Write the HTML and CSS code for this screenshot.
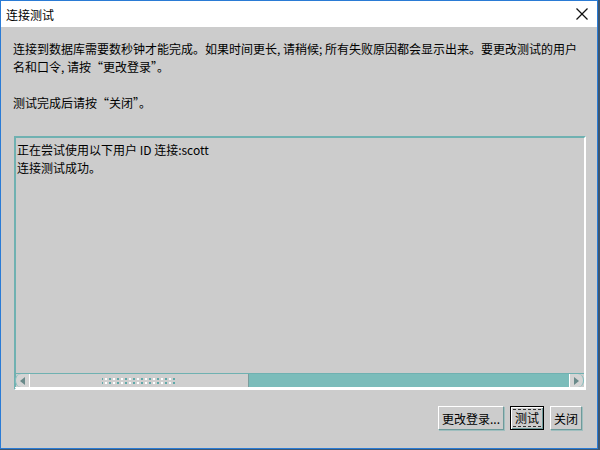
FILE: index.html
```html
<!DOCTYPE html>
<html lang="zh">
<head>
    <meta charset="UTF-8">
    <link rel="stylesheet" href="styles.css">
    <title>连接测试</title>
</head>
<body>
    <div class="window">
        <div class="titlebar">
            <span class="title">连接测试</span>
            <svg class="close" width="12" height="12" viewBox="0 0 12 12">
                <line x1="0.5" y1="0.5" x2="11.5" y2="11.5" />
                <line x1="11.5" y1="0.5" x2="0.5" y2="11.5" />
            </svg>
        </div>
        <div class="content">
            <p class="info">连接到数据库需要数秒钟才能完成。如果时间更长, 请稍候; 所有失败原因都会显示出来。要更改测试的用户<br>名和口令, 请按“更改登录”。</p>
            <p class="info">测试完成后请按“关闭”。</p>
            <div class="log">
                <div class="log-text">
                    <div>正在尝试使用以下用户 ID 连接:scott</div>
                    <div>连接测试成功。</div>
                </div>
                <div class="hscroll">
                    <div class="arrow left"><span></span></div>
                    <div class="thumb">
                        <div class="grip"></div>
                    </div>
                    <div class="track"></div>
                    <div class="arrow right"><span></span></div>
                </div>
            </div>
            <div class="buttons">
                <button type="button" class="btn">更改登录...</button>
                <button type="button" class="btn focused"><span>测试</span></button>
                <button type="button" class="btn">关闭</button>
            </div>
        </div>
    </div>
</body>
</html>
```

FILE: styles.css
```css
* {
    box-sizing: border-box;
}

html {
    background-color: #3d5670;
}

body {
    margin: 0;
    font-family: "Noto Sans CJK SC", "DejaVu Sans", sans-serif;
    font-size: 12px;
    color: #000;
}

.window {
    width: 598px;
    height: 449px;
    border: 1px solid #2a7bd5;
    background-color: #cccccc;
    display: flex;
    flex-direction: column;
}

.titlebar {
    height: 26px;
    background-color: #fff;
    display: flex;
    align-items: center;
    justify-content: space-between;
    padding: 0 9px 0 5px;
}

.title {
    font-size: 12px;
}

.close {
    stroke: #111;
    stroke-width: 1.2px;
}

.content {
    flex: 1;
    display: flex;
    flex-direction: column;
    padding: 13px 11px 0 12px;
}

.info {
    margin: 0 0 18px 0;
    line-height: 18px;
    white-space: nowrap;
}

.info + .info {
    margin-bottom: 24px;
}

.log {
    height: 254px;
    margin-left: 1px;
    border-top: 2px solid #6fb1b1;
    border-left: 2px solid #6fb1b1;
    border-right: 2px solid #fff;
    border-bottom: 2px solid #fff;
    display: flex;
    flex-direction: column;
}

.log-text {
    flex: 1;
    padding: 3px 0 0 1px;
    line-height: 18px;
}

.hscroll {
    height: 15px;
    margin: 0 0 0 -1px;
    display: flex;
    border-top: 1px solid #6fb1b1;
    border-bottom: 1px solid #fff;
}

.arrow {
    width: 15px;
    background-color: #d4d4d4;
    display: flex;
    align-items: center;
    justify-content: center;
}

.arrow.left {
    border-radius: 6px 0 0 6px;
    border-left: 1px solid #7fbdbd;
    border-right: 1px solid #fff;
}

.arrow.right {
    border-radius: 0 6px 6px 0;
    border-left: 1px solid #fff;
    border-right: 1px solid #7fbdbd;
}

.arrow span {
    width: 0;
    height: 0;
    border-top: 4px solid transparent;
    border-bottom: 4px solid transparent;
}

.arrow.left span {
    border-right: 5px solid #6a8a8a;
}

.arrow.right span {
    border-left: 5px solid #6a8a8a;
}

.thumb {
    width: 219px;
    background-color: #cfcfcf;
    border-right: 1px solid #7b9c9c;
    display: flex;
    align-items: center;
    justify-content: center;
}

.grip {
    width: 74px;
    height: 8px;
    background-image: radial-gradient(circle, #fff 0.8px, transparent 1.2px), radial-gradient(circle, #5fa8a8 0.8px, transparent 1.2px);
    background-size: 8px 4px, 8px 4px;
    background-position: 0 0, 4px 4px;
}

.track {
    flex: 1;
    background-color: #7bbcba;
}

.buttons {
    display: flex;
    justify-content: flex-end;
    gap: 6px;
    margin-top: 16px;
    padding-right: 4px;
}

.btn {
    height: 24px;
    padding: 0 3px;
    font-family: "Noto Sans CJK SC", "DejaVu Sans", sans-serif;
    font-size: 12px;
    background-color: #cccccc;
    border-top: 1px solid #fff;
    border-left: 1px solid #fff;
    border-right: 1px solid #6e9a9a;
    border-bottom: 1px solid #6e9a9a;
    box-shadow: 1px 1px 0 #9fbfbf;
    color: #000;
}

.btn.focused {
    border: 1px solid #000;
    padding: 2px;
    box-shadow: inset 1px 1px 0 #fff, inset -1px -1px 0 #6e9a9a;
}

.btn.focused span {
    display: block;
    height: 18px;
    line-height: 16px;
    padding: 0 2px;
    border-top: 1px dashed #333;
    border-bottom: 1px dashed #333;
}
```
